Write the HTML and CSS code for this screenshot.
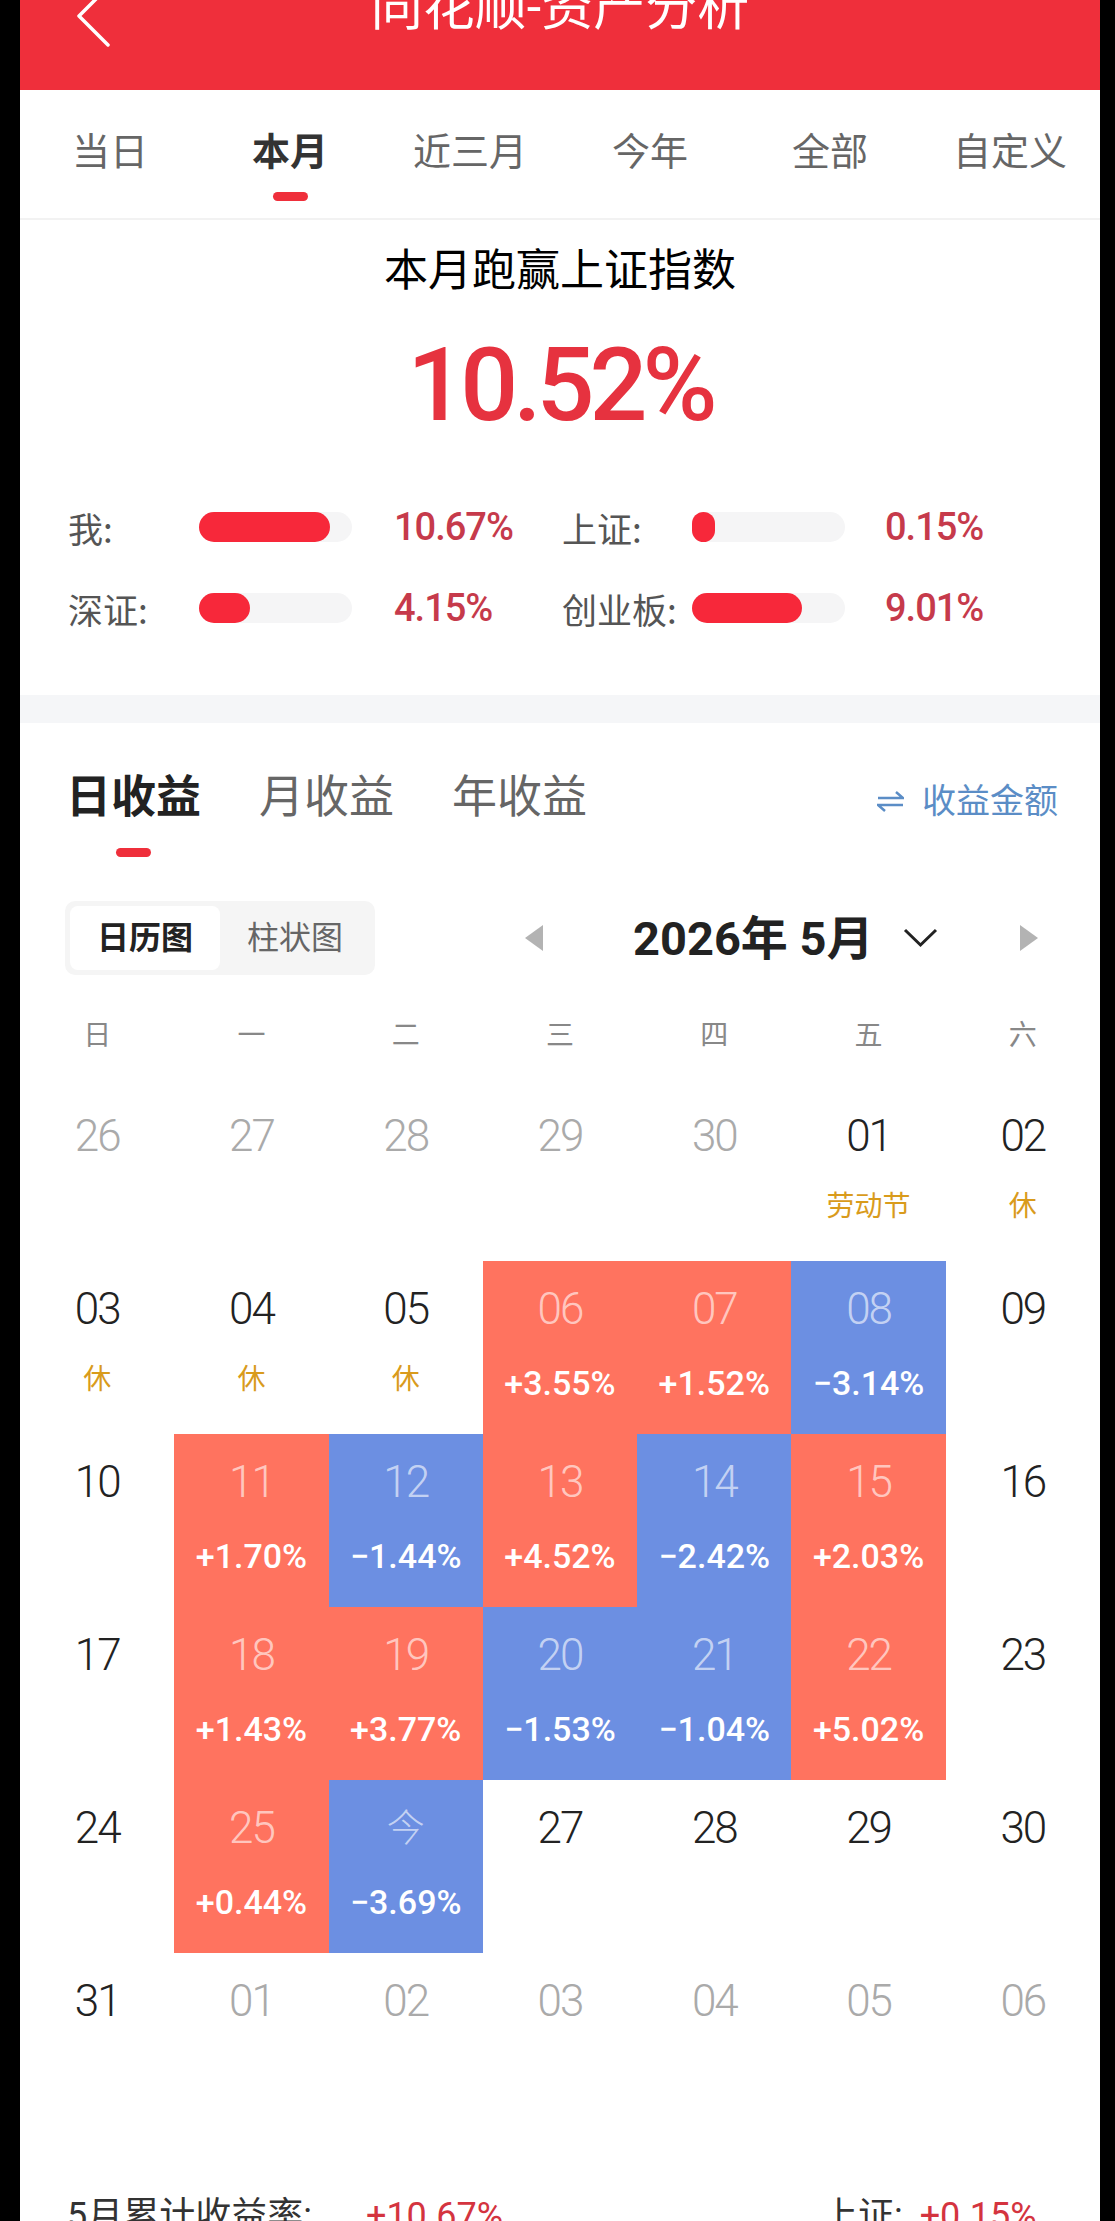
FILE: index.html
```html
<!DOCTYPE html>
<html>
  <head>
    <meta charset="UTF-8">
    <title>同花顺-资产分析</title>
    <link rel="stylesheet" href="styles.css">
  </head>
  <body>
    <div class="page">
      <div class="titlebar">
        <svg class="back" width="36" height="66" viewBox="0 0 36 66">
          <polyline points="32,3 3,32 32,61" />
        </svg>
        <h1>同花顺-资产分析</h1>
        <span></span>
      </div>

      <div class="periods">
        <span class="period">当日</span>
        <span class="period active">本月</span>
        <span class="period">近三月</span>
        <span class="period">今年</span>
        <span class="period">全部</span>
        <span class="period">自定义</span>
      </div>

      <div class="summary">
        <h2>本月跑赢上证指数</h2>
        <div class="big">10.52%</div>
        <div class="compare">
          <span class="label">我:</span>
          <span class="track"><span class="fill" style="width: 85.5%"></span></span>
          <span class="value">10.67%</span>
          <span class="label">上证:</span>
          <span class="track"><span class="fill" style="width: 15%"></span></span>
          <span class="value">0.15%</span>

          <span class="label">深证:</span>
          <span class="track"><span class="fill" style="width: 33.5%"></span></span>
          <span class="value">4.15%</span>
          <span class="label">创业板:</span>
          <span class="track"><span class="fill" style="width: 72%"></span></span>
          <span class="value">9.01%</span>
        </div>
      </div>

      <div class="band"></div>

      <div class="daily">
        <div class="kinds">
          <span class="kind active">日收益</span>
          <span class="kind">月收益</span>
          <span class="kind">年收益</span>
          <span class="amount">
            <svg width="27" height="21" viewBox="0 0 27 21">
              <path d="M1 7 H26 L19 1 M26 14 H1 L8 20" />
            </svg>
            收益金额
          </span>
        </div>

        <div class="tools">
          <div class="switch">
            <span class="sw active">日历图</span>
            <span class="sw">柱状图</span>
          </div>
          <span class="tri left"></span>
          <span class="month-label">2026年 5月</span>
          <svg class="chev" width="35" height="20" viewBox="0 0 35 20">
            <polyline points="2,2 17.5,17 33,2" />
          </svg>
          <span class="tri right"></span>
        </div>

        <div class="weekdays">
          <span>日</span><span>一</span><span>二</span><span>三</span><span>四</span><span>五</span><span>六</span>
        </div>

        <div class="days">
          <div class="day other"><span class="num">26</span></div>
          <div class="day other"><span class="num">27</span></div>
          <div class="day other"><span class="num">28</span></div>
          <div class="day other"><span class="num">29</span></div>
          <div class="day other"><span class="num">30</span></div>
          <div class="day"><span class="num">01</span><span class="note">劳动节</span></div>
          <div class="day"><span class="num">02</span><span class="note">休</span></div>

          <div class="day"><span class="num">03</span><span class="note">休</span></div>
          <div class="day"><span class="num">04</span><span class="note">休</span></div>
          <div class="day"><span class="num">05</span><span class="note">休</span></div>
          <div class="day up"><span class="num">06</span><span class="pct">+3.55%</span></div>
          <div class="day up"><span class="num">07</span><span class="pct">+1.52%</span></div>
          <div class="day down"><span class="num">08</span><span class="pct">−3.14%</span></div>
          <div class="day"><span class="num">09</span></div>

          <div class="day"><span class="num">10</span></div>
          <div class="day up"><span class="num">11</span><span class="pct">+1.70%</span></div>
          <div class="day down"><span class="num">12</span><span class="pct">−1.44%</span></div>
          <div class="day up"><span class="num">13</span><span class="pct">+4.52%</span></div>
          <div class="day down"><span class="num">14</span><span class="pct">−2.42%</span></div>
          <div class="day up"><span class="num">15</span><span class="pct">+2.03%</span></div>
          <div class="day"><span class="num">16</span></div>

          <div class="day"><span class="num">17</span></div>
          <div class="day up"><span class="num">18</span><span class="pct">+1.43%</span></div>
          <div class="day up"><span class="num">19</span><span class="pct">+3.77%</span></div>
          <div class="day down"><span class="num">20</span><span class="pct">−1.53%</span></div>
          <div class="day down"><span class="num">21</span><span class="pct">−1.04%</span></div>
          <div class="day up"><span class="num">22</span><span class="pct">+5.02%</span></div>
          <div class="day"><span class="num">23</span></div>

          <div class="day"><span class="num">24</span></div>
          <div class="day up"><span class="num">25</span><span class="pct">+0.44%</span></div>
          <div class="day down"><span class="num today">今</span><span class="pct">−3.69%</span></div>
          <div class="day"><span class="num">27</span></div>
          <div class="day"><span class="num">28</span></div>
          <div class="day"><span class="num">29</span></div>
          <div class="day"><span class="num">30</span></div>

          <div class="day"><span class="num">31</span></div>
          <div class="day other"><span class="num">01</span></div>
          <div class="day other"><span class="num">02</span></div>
          <div class="day other"><span class="num">03</span></div>
          <div class="day other"><span class="num">04</span></div>
          <div class="day other"><span class="num">05</span></div>
          <div class="day other"><span class="num">06</span></div>
        </div>

        <div class="totals">
          <span>5月累计收益率:</span>
          <span class="val">+10.67%</span>
          <span class="side">上证: <span class="val">+0.15%</span></span>
        </div>
      </div>
    </div>
  </body>
</html>
```

FILE: styles.css
```css
* {
  box-sizing: border-box;
}

html, body {
  height: 2221px;
  overflow: hidden;
}

body {
  margin: 0;
  background: #000;
  color: #222;
  font-family: Roboto, "Noto Sans CJK SC", sans-serif;
}

.page {
  width: 1080px;
  height: 2221px;
  margin-left: 20px;
  background: #fff;
}

/* title bar, its top is cut off by the screenshot */
.titlebar {
  display: grid;
  grid-template-columns: 1fr auto 1fr;
  height: 90px;
  background: #ef2f3b;
}
.back {
  margin: -16px 0 0 56px;
}
.back polyline {
  fill: none;
  stroke: #fff;
  stroke-width: 3.5;
  stroke-linecap: round;
  stroke-linejoin: round;
}
.titlebar h1 {
  margin: -18px 0 0;
  font-size: 52px;
  line-height: 52px;
  font-weight: normal;
  color: #fff;
}

.periods {
  display: flex;
  align-items: flex-start;
  height: 130px;
  padding-top: 43px;
  border-bottom: 2px solid #f2f2f2;
}
.period {
  flex: 1;
  text-align: center;
  font-size: 38px;
  line-height: 38px;
  color: #666;
}
.period.active {
  color: #333;
  font-weight: bold;
}
.period.active::after {
  content: "";
  display: block;
  width: 35px;
  height: 9px;
  margin: 21px auto 0;
  border-radius: 5px;
  background: #ef2f3b;
}

.summary {
  padding: 29px 0 72px;
  text-align: center;
}
.summary h2 {
  margin: 0;
  font-size: 44px;
  line-height: 44px;
  font-weight: normal;
  color: #000;
}
.big {
  margin-top: 41px;
  font-size: 102px;
  line-height: 102px;
  font-weight: 500;
  letter-spacing: -5px;
  color: #e6323f;
}

.compare {
  display: grid;
  grid-template-columns: 131px 153px 210px 130px 153px 1fr;
  grid-auto-rows: 30px;
  row-gap: 51px;
  align-items: center;
  margin-top: 76px;
  padding-left: 48px;
  text-align: left;
}
.compare .label {
  font-family: "Noto Sans CJK SC", sans-serif;
  font-size: 35px;
  line-height: 35px;
  color: #555;
}
.track {
  height: 30px;
  border-radius: 15px;
  background: #f5f5f6;
}
.fill {
  display: block;
  height: 30px;
  border-radius: 15px;
  background: #f7283a;
}
.compare .value {
  font-size: 38px;
  line-height: 38px;
  font-weight: 500;
  letter-spacing: -1px;
  color: #c63a4b;
}
.compare .value:nth-child(3n) {
  padding-left: 42px;
}
.compare .value:nth-child(6n) {
  padding-left: 40px;
}

.band {
  height: 28px;
  background: #f5f6f8;
}

.daily {
  padding-top: 52px;
}

.kinds {
  display: flex;
  align-items: flex-start;
  gap: 58px;
  padding: 0 42px 0 46px;
}
.kind {
  font-size: 45px;
  line-height: 45px;
  color: #666;
}
.kind.active {
  color: #222;
  font-weight: bold;
}
.kind.active::after {
  content: "";
  display: block;
  width: 35px;
  height: 9px;
  margin: 28px auto 0;
  border-radius: 5px;
  background: #ef2f3b;
}
.amount {
  display: flex;
  align-items: center;
  gap: 18px;
  margin: 9px 0 0 auto;
  font-size: 34px;
  line-height: 34px;
  color: #5b8dc6;
}
.amount path {
  fill: none;
  stroke: #5b8dc6;
  stroke-width: 2.5;
}

.tools {
  display: flex;
  align-items: center;
  margin-top: 44px;
  padding: 0 62px 0 45px;
}
.switch {
  display: flex;
  padding: 5px;
  border-radius: 10px;
  background: #f5f5f5;
}
.sw {
  width: 150px;
  height: 64px;
  line-height: 64px;
  text-align: center;
  font-size: 32px;
  color: #666;
}
.sw.active {
  border-radius: 8px;
  background: #fff;
  color: #222;
  font-weight: bold;
}
.tri {
  width: 0;
  height: 0;
  border-top: 13px solid transparent;
  border-bottom: 13px solid transparent;
}
.tri.left {
  margin-left: 150px;
  border-right: 18px solid #b3b3b3;
}
.tri.right {
  margin-left: auto;
  border-left: 18px solid #b3b3b3;
}
.month-label {
  margin-left: 90px;
  font-size: 47px;
  line-height: 47px;
  font-weight: bold;
  color: #222;
}
.chev {
  margin-left: 29px;
}
.chev polyline {
  fill: none;
  stroke: #222;
  stroke-width: 3;
}

.weekdays {
  display: grid;
  grid-template-columns: repeat(7, 1fr);
  margin-top: 47px;
  text-align: center;
  font-size: 28px;
  line-height: 28px;
  color: #888;
}

.days {
  display: grid;
  grid-template-columns: repeat(7, 1fr);
  grid-auto-rows: 173px;
  margin-top: 38px;
}
.day {
  padding-top: 26px;
  text-align: center;
}
.day .num {
  display: block;
  font-size: 44px;
  line-height: 44px;
  font-weight: 300;
  letter-spacing: -2px;
  color: #222;
}
.day.other .num {
  color: #aaa;
}
.day .num.today {
  font-size: 38px;
  letter-spacing: 0;
}
.day .pct {
  display: block;
  margin-top: 35px;
  font-size: 34px;
  line-height: 34px;
  font-weight: 500;
  color: #fff;
}
.day .note {
  display: block;
  margin-top: 32px;
  font-size: 28px;
  line-height: 34px;
  color: #d99b1c;
}
.day.up {
  background: #ff735f;
}
.day.down {
  background: #6c8fe2;
}
.day.up .num, .day.down .num {
  color: rgba(255, 255, 255, 0.62);
}

.totals {
  display: flex;
  margin-top: 72px;
  padding-left: 47px;
  font-size: 36px;
  line-height: 36px;
  color: #333;
}
.totals .val {
  margin-left: 54px;
  color: #d4343f;
}
.totals .side {
  margin-left: auto;
  width: 278px;
}
.totals .side .val {
  margin-left: 8px;
}
```
